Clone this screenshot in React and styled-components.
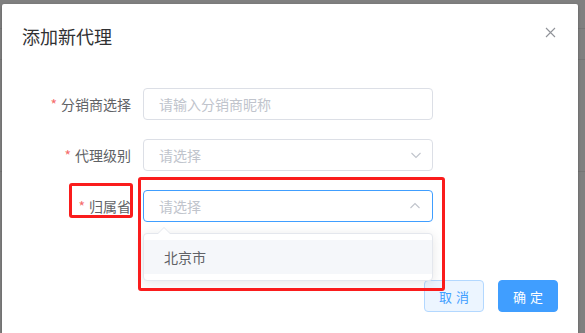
import React from "react";
import styled, { createGlobalStyle } from "styled-components";

const GlobalStyle = createGlobalStyle`
  html, body {
    margin: 0;
    padding: 0;
    background: #808080;
    font-family: "Noto Sans CJK SC", "Noto Sans", sans-serif;
  }
`;

const Page = styled.div`
  position: relative;
  width: 585px;
  height: 333px;
  overflow: hidden;
  background: #808080;
`;

const Backdrop = styled.div`
  display: flex;
  flex-direction: column;
`;

const BackdropRow = styled.div`
  height: ${(p) => p.h}px;
  border-bottom: 1px solid #767676;
`;

const Dialog = styled.div`
  position: absolute;
  left: 2px;
  top: 4px;
  width: 576px;
  height: 340px;
  background: #fff;
  border-radius: 2px;
  box-shadow: 0 1px 3px rgba(0, 0, 0, 0.3);
`;

const Header = styled.div`
  position: relative;
  padding: 20px 20px 10px;
`;

const Title = styled.span`
  font-size: 18px;
  line-height: 24px;
  color: #303133;
`;

const CloseButton = styled.button`
  position: absolute;
  top: 20px;
  right: 20px;
  width: 16px;
  height: 16px;
  padding: 0;
  border: none;
  background: transparent;
  display: flex;
  align-items: center;
  justify-content: center;
`;

const Body = styled.div`
  padding: 29px 20px 29px;
`;

const FormItem = styled.div`
  display: flex;
  align-items: center;
  margin-bottom: 19px;
`;

const Label = styled.label`
  width: 121px;
  box-sizing: border-box;
  padding-right: 12px;
  text-align: right;
  font-size: 14px;
  color: #606266;

  &::before {
    content: "*";
    color: #f56c6c;
    margin-right: 4px;
  }
`;

const Field = styled.div`
  position: relative;
  width: 290px;
`;

const Input = styled.input`
  width: 100%;
  height: 32px;
  box-sizing: border-box;
  padding: 0 30px 0 15px;
  border: 1px solid ${(p) => (p.$focused ? "#409eff" : "#dcdfe6")};
  border-radius: 4px;
  outline: none;
  font-family: inherit;
  font-size: 14px;
  color: #606266;
  background: #fff;

  &::placeholder {
    color: #c0c4cc;
  }
`;

const Suffix = styled.span`
  position: absolute;
  right: 5px;
  top: 0;
  width: 25px;
  height: 32px;
  display: flex;
  align-items: center;
  justify-content: center;
  transform: rotate(${(p) => (p.$open ? 180 : 0)}deg);
`;

const Dropdown = styled.div`
  position: absolute;
  top: 43px;
  left: 0;
  width: 100%;
  box-sizing: border-box;
  padding: 6px 0;
  background: #fff;
  border: 1px solid #e4e7ed;
  border-radius: 4px;
  box-shadow: 0 2px 12px 0 rgba(0, 0, 0, 0.1);
  z-index: 2;

  &::before,
  &::after {
    content: "";
    position: absolute;
    left: 14px;
    border: 6px solid transparent;
    border-top-width: 0;
  }
  &::before {
    top: -7px;
    border-bottom-color: #e4e7ed;
  }
  &::after {
    top: -6px;
    border-bottom-color: #fff;
  }
`;

const Option = styled.div`
  height: 34px;
  line-height: 34px;
  padding: 0 20px;
  font-size: 14px;
  color: #606266;
  background: ${(p) => (p.$hover ? "#f5f7fa" : "#fff")};
`;

const Footer = styled.div`
  display: flex;
  justify-content: flex-end;
  gap: 14px;
  padding: 10px 20px 20px;
`;

const Button = styled.button`
  width: 60px;
  height: 32px;
  padding: 0;
  border-radius: 4px;
  font-family: inherit;
  font-size: 13px;
  letter-spacing: 4px;
  text-indent: 4px;
  border: 1px solid ${(p) => (p.$primary ? "#409eff" : "#b3d8ff")};
  background: ${(p) => (p.$primary ? "#409eff" : "#ecf5ff")};
  color: ${(p) => (p.$primary ? "#fff" : "#409eff")};
`;

const Mark = styled.div`
  position: absolute;
  left: ${(p) => p.x}px;
  top: ${(p) => p.y}px;
  width: ${(p) => p.w}px;
  height: ${(p) => p.h}px;
  box-sizing: border-box;
  border: 3px solid #fa1c1c;
  border-radius: 3px;
  z-index: 3;
`;

const Chevron = ({ open }) => (
  <Suffix $open={open}>
    <svg width="12" height="12" viewBox="0 0 12 12">
      <path d="M1.5 4 L6 8.5 L10.5 4" fill="none" stroke="#c0c4cc" strokeWidth="1.1" />
    </svg>
  </Suffix>
);

export default function App() {
  return (
    <>
      <GlobalStyle />
      <Page>
        <Backdrop>
          <BackdropRow h={28} />
          <BackdropRow h={30} />
          <BackdropRow h={111} />
        </Backdrop>
        <Dialog>
          <Header>
            <Title>添加新代理</Title>
            <CloseButton aria-label="关闭">
              <svg width="11" height="11" viewBox="0 0 11 11">
                <path d="M1 1 L10 10 M10 1 L1 10" stroke="#909399" strokeWidth="1.1" />
              </svg>
            </CloseButton>
          </Header>
          <Body>
            <FormItem>
              <Label>分销商选择</Label>
              <Field>
                <Input placeholder="请输入分销商昵称" />
              </Field>
            </FormItem>
            <FormItem>
              <Label>代理级别</Label>
              <Field>
                <Input placeholder="请选择" readOnly />
                <Chevron />
              </Field>
            </FormItem>
            <FormItem>
              <Label>归属省</Label>
              <Field>
                <Input placeholder="请选择" readOnly $focused />
                <Chevron open />
                <Dropdown>
                  <Option $hover>北京市</Option>
                </Dropdown>
              </Field>
            </FormItem>
          </Body>
          <Footer>
            <Button>取消</Button>
            <Button $primary>确定</Button>
          </Footer>
        </Dialog>
        <Mark x={69} y={183} w={64} h={35} />
        <Mark x={138} y={177} w={307} h={114} />
      </Page>
    </>
  );
}
